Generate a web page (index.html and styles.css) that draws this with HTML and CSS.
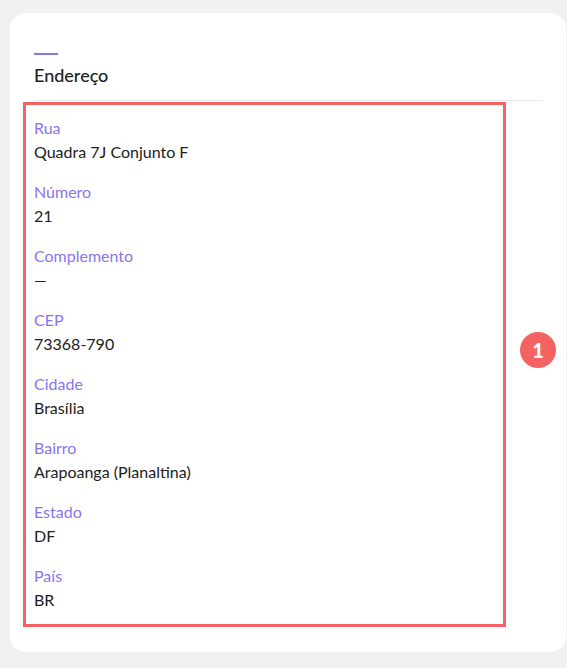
FILE: index.html
```html
<!DOCTYPE html>
<html>
<head>
  <title>Endereço</title>
  <link rel="stylesheet" href="styles.css">
</head>
<body>
  <div class="card">
    <div class="card-header">
      <span class="accent"></span>
      <h2>Endereço</h2>
    </div>

    <div class="fields">
      <div class="field">
        <div class="label">Rua</div>
        <div class="value">Quadra 7J Conjunto F</div>
      </div>
      <div class="field">
        <div class="label">Número</div>
        <div class="value">21</div>
      </div>
      <div class="field">
        <div class="label">Complemento</div>
        <div class="value">—</div>
      </div>
      <div class="field">
        <div class="label">CEP</div>
        <div class="value">73368-790</div>
      </div>
      <div class="field">
        <div class="label">Cidade</div>
        <div class="value">Brasília</div>
      </div>
      <div class="field">
        <div class="label">Bairro</div>
        <div class="value">Arapoanga (Planaltina)</div>
      </div>
      <div class="field">
        <div class="label">Estado</div>
        <div class="value">DF</div>
      </div>
      <div class="field">
        <div class="label">País</div>
        <div class="value">BR</div>
      </div>
      <span class="badge">1</span>
    </div>
  </div>
</body>
</html>
```

FILE: styles.css
```css
body {
  margin: 0;
  background-color: #f1f1f1;
  font-family: 'Lato', 'Noto Sans', sans-serif;
  color: #212121;
}
.card {
  margin: 13px 1px 15px 10px;
  padding: 40px 23px 25px 24px;
  background-color: white;
  border-radius: 16px;
}
.card-header {
  border-bottom: 1px solid #ececec;
  padding-bottom: 12px;
}
.accent {
  display: block;
  width: 24px;
  height: 2px;
  background-color: #8c73ee;
}
.card-header h2 {
  margin: 7px 0 0;
  font-size: 18px;
  font-weight: 500;
  line-height: 26px;
}
.fields {
  position: relative;
  width: 469px;
  margin: 1px 0 0 -11px;
  padding: 11px 0 12px 8px;
  border: 3px solid #f66262;
  display: flex;
  flex-direction: column;
  gap: 16px;
}
.label {
  color: #8a74ee;
  font-size: 16px;
  line-height: 24px;
}
.value {
  font-size: 16px;
  line-height: 24px;
}
.badge {
  position: absolute;
  right: -53px;
  top: 227px;
  width: 36px;
  height: 36px;
  border-radius: 50%;
  background-color: #f46262;
  color: white;
  font-weight: 900;
  font-size: 20px;
  line-height: 36px;
  text-align: center;
}
```
